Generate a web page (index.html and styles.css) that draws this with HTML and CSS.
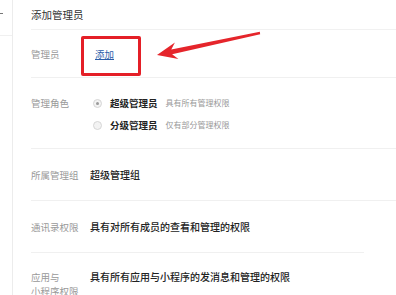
FILE: index.html
```html
<!DOCTYPE html>
<html lang="zh-CN">
<head>
<meta charset="utf-8">
<title>添加管理员</title>
<link rel="stylesheet" href="styles.css">
</head>
<body>
<div class="page">
  <aside class="sidebar">
    <div class="side-item"><span class="dash"></span></div>
  </aside>
  <main class="main">
    <div class="title">添加管理员</div>
    <div class="row row-admin">
      <div class="label">管理员</div>
      <div class="value"><a class="link" href="#">添加</a></div>
    </div>
    <div class="row row-role">
      <div class="label">管理角色</div>
      <div class="value">
        <div class="radio-line"><span class="radio checked"></span><span class="radio-text">超级管理员</span><span class="desc">具有所有管理权限</span></div>
        <div class="radio-line"><span class="radio"></span><span class="radio-text">分级管理员</span><span class="desc">仅有部分管理权限</span></div>
      </div>
    </div>
    <div class="row row-std">
      <div class="label">所属管理组</div>
      <div class="value strong">超级管理组</div>
    </div>
    <div class="row row-std row-short">
      <div class="label">通讯录权限</div>
      <div class="value strong">具有对所有成员的查看和管理的权限</div>
    </div>
    <div class="row row-last">
      <div class="label">应用与<br>小程序权限</div>
      <div class="value strong">具有所有应用与小程序的发消息和管理的权限</div>
    </div>
  </main>
  <div class="mark-box"></div>
  <svg class="mark-arrow" width="396" height="295" viewBox="0 0 396 295">
    <polygon points="157,55 174.9,42.6 171.3,49.6 259.8,31.8 260.2,34.2 172.1,54.2 178.4,59" fill="#e5252b"/>
  </svg>
</div>
</body>
</html>
```

FILE: styles.css
```css
html, body {
  margin: 0;
  padding: 0;
  background: #fff;
}
body {
  font-family: "Noto Sans CJK SC", "Noto Sans", sans-serif;
  color: #333;
}
.page {
  position: relative;
  width: 396px;
  height: 295px;
  overflow: hidden;
  display: flex;
}
.sidebar {
  width: 12px;
  flex: none;
  border-right: 1px solid #ececec;
}
.side-item {
  height: 36px;
  border-bottom: 1px solid #f0f0f0;
  box-sizing: border-box;
  padding-top: 13px;
}
.dash {
  display: block;
  width: 3px;
  height: 1px;
  background: #777;
}
.main {
  flex: 1;
  padding-left: 18px;
}
.title {
  height: 29px;
  line-height: 30px;
  font-size: 10.5px;
  color: #333;
  border-bottom: 1px solid #f1f1f1;
}
.row {
  display: flex;
  border-bottom: 1px solid #f0f0f0;
}
.label {
  width: 59px;
  flex: none;
  font-size: 9.5px;
  color: #999;
  line-height: 22px;
}
.value {
  font-size: 10px;
  line-height: 22px;
  color: #222;
}
.strong {
  font-weight: 500;
}
.row-admin {
  height: 47px;
  align-items: center;
}
.link {
  margin-left: 5px;
  color: #2a5ca8;
  font-size: 9.5px;
  text-decoration: underline;
}
.row-role {
  padding: 14px 0 12px;
}
.radio-line {
  display: flex;
  align-items: center;
  height: 22px;
}
.radio {
  width: 9px;
  height: 9px;
  margin-left: 3px;
  margin-right: 8px;
  border: 1px solid #d6d6d6;
  border-radius: 50%;
  background: #f3f3f3;
  box-sizing: border-box;
  position: relative;
}
.radio.checked::after {
  content: "";
  position: absolute;
  left: 2px;
  top: 2px;
  width: 3px;
  height: 3px;
  border-radius: 50%;
  background: #9a9a9a;
}
.radio-text {
  font-size: 9.5px;
  font-weight: bold;
  color: #222;
  margin-right: 8px;
}
.desc {
  font-size: 8px;
  color: #999;
}
.row-std {
  height: 51px;
  align-items: center;
}
.row-short {
  margin-right: 32px;
}
.row-last {
  border-bottom: none;
  padding-top: 13px;
}
.row-last .label {
  line-height: 14px;
  padding-top: 4px;
}
.mark-box {
  position: absolute;
  left: 81px;
  top: 36px;
  width: 60px;
  height: 40px;
  box-sizing: border-box;
  border: 3px solid #e41f27;
  border-radius: 2px;
}
.mark-arrow {
  position: absolute;
  left: 0;
  top: 0;
  pointer-events: none;
}
```
